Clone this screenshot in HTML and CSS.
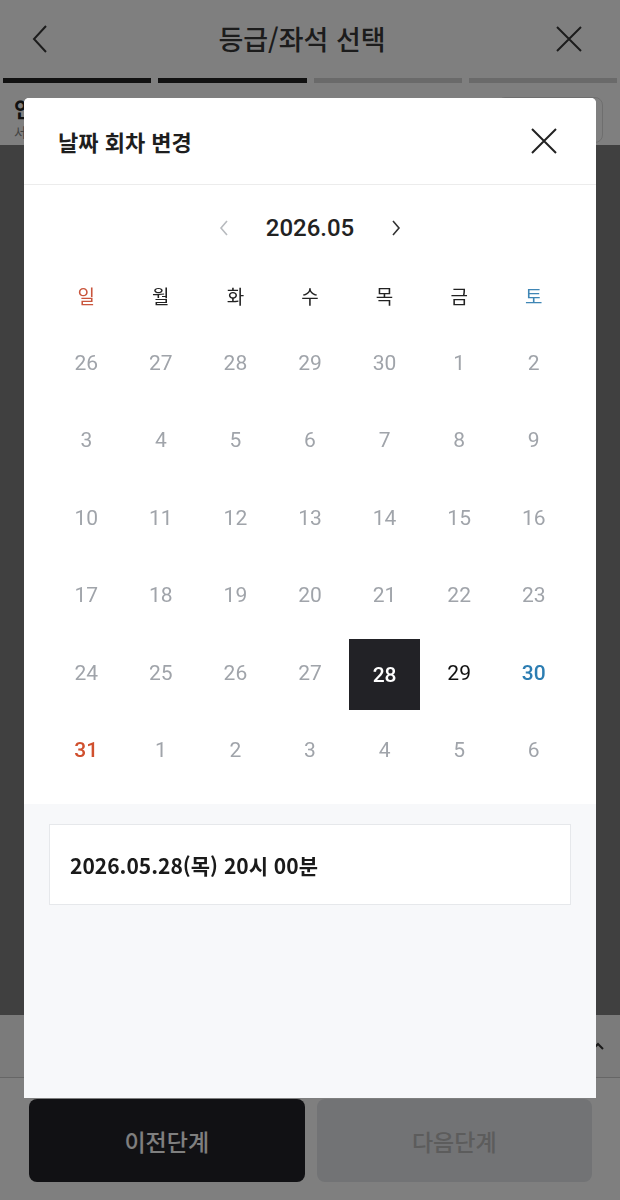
FILE: index.html
```html
<!DOCTYPE html>
<html lang="ko">
<head>
  <meta charset="UTF-8" />
  <title>등급/좌석 선택</title>
  <link rel="stylesheet" href="styles.css">
</head>
<body>

  <div class="page">
    <header class="top-bar">
      <button class="icon-btn back" aria-label="뒤로">
        <svg width="16" height="28" viewBox="0 0 16 28"><path d="M14 1 L2 14 L14 27" fill="none" stroke="#383838" stroke-width="2"/></svg>
      </button>
      <h1 class="top-title">등급/좌석 선택</h1>
      <button class="icon-btn close" aria-label="닫기">
        <svg width="26" height="26" viewBox="0 0 26 26"><path d="M1 1 L25 25 M25 1 L1 25" fill="none" stroke="#383838" stroke-width="2"/></svg>
      </button>
    </header>

    <div class="steps">
      <span class="step done"></span>
      <span class="step done"></span>
      <span class="step"></span>
      <span class="step"></span>
    </div>

    <div class="show-info">
      <div class="show-text">
        <p class="show-name">인</p>
        <p class="show-place">서</p>
      </div>
      <button class="outline-btn"></button>
    </div>

    <div class="seat-area"></div>

    <div class="summary-strip">
      <svg class="strip-arrow" width="12" height="8" viewBox="0 0 12 8"><path d="M1 7 L6 2 L11 7" fill="none" stroke="#333" stroke-width="2"/></svg>
    </div>

    <footer class="bottom-bar">
      <button class="step-btn prev">이전단계</button>
      <button class="step-btn next">다음단계</button>
    </footer>
  </div>

  <div class="dim"></div>

  <div class="modal">
    <div class="modal-head">
      <h2 class="modal-title">날짜 회차 변경</h2>
      <button class="icon-btn modal-close" aria-label="닫기">
        <svg width="26" height="26" viewBox="0 0 26 26"><path d="M1 1 L25 25 M25 1 L1 25" fill="none" stroke="#222" stroke-width="2"/></svg>
      </button>
    </div>

    <div class="calendar">
      <div class="month-nav">
        <button class="icon-btn nav-arrow" aria-label="이전 달">
          <svg width="10" height="16" viewBox="0 0 10 16"><path d="M8 1 L2 8 L8 15" fill="none" stroke="#b8bbbf" stroke-width="1.6"/></svg>
        </button>
        <span class="month-label">2026.05</span>
        <button class="icon-btn nav-arrow" aria-label="다음 달">
          <svg width="10" height="16" viewBox="0 0 10 16"><path d="M2 1 L8 8 L2 15" fill="none" stroke="#333" stroke-width="1.6"/></svg>
        </button>
      </div>

      <div class="weekdays">
        <span class="sun">일</span>
        <span>월</span>
        <span>화</span>
        <span>수</span>
        <span>목</span>
        <span>금</span>
        <span class="sat">토</span>
      </div>

      <div class="days">
        <span class="day off">26</span><span class="day off">27</span><span class="day off">28</span><span class="day off">29</span><span class="day off">30</span><span class="day off">1</span><span class="day off">2</span>
        <span class="day off">3</span><span class="day off">4</span><span class="day off">5</span><span class="day off">6</span><span class="day off">7</span><span class="day off">8</span><span class="day off">9</span>
        <span class="day off">10</span><span class="day off">11</span><span class="day off">12</span><span class="day off">13</span><span class="day off">14</span><span class="day off">15</span><span class="day off">16</span>
        <span class="day off">17</span><span class="day off">18</span><span class="day off">19</span><span class="day off">20</span><span class="day off">21</span><span class="day off">22</span><span class="day off">23</span>
        <span class="day off">24</span><span class="day off">25</span><span class="day off">26</span><span class="day off">27</span><span class="day selected"><b>28</b></span><span class="day">29</span><span class="day sat">30</span>
        <span class="day sun">31</span><span class="day off">1</span><span class="day off">2</span><span class="day off">3</span><span class="day off">4</span><span class="day off">5</span><span class="day off">6</span>
      </div>
    </div>

    <div class="round-list">
      <div class="round-item">2026.05.28(목) 20시 00분</div>
    </div>
  </div>

</body>
</html>
```

FILE: styles.css
```css
* {
  box-sizing: border-box;
}

body {
  margin: 0;
  font-family: "Noto Sans CJK KR", "Noto Sans", sans-serif;
  color: #222;
  background: #fff;
}

p,
h1,
h2 {
  margin: 0;
}

button {
  font-family: inherit;
  border: none;
  background: none;
  padding: 0;
  cursor: pointer;
}

.icon-btn {
  display: flex;
  align-items: center;
  justify-content: center;
}

/* page behind the popup */
.page {
  height: 1200px;
  display: flex;
  flex-direction: column;
  overflow: hidden;
}

.top-bar {
  height: 78px;
  display: flex;
  align-items: center;
  justify-content: space-between;
  padding: 0 38px 0 32px;
}

.top-title {
  font-size: 27px;
  font-weight: 500;
  color: #383838;
  margin-top: -2px;
}

.steps {
  display: flex;
  gap: 7px;
  padding: 0 3px;
}

.step {
  flex: 1;
  height: 5px;
  background: #d4d4d4;
}

.step.done {
  background: #222;
}

.show-info {
  height: 62px;
  display: flex;
  align-items: flex-start;
  justify-content: space-between;
  padding: 14px 17px 0 14px;
}

.show-name {
  font-size: 21px;
  font-weight: 700;
  line-height: 22px;
}

.show-place {
  font-size: 13px;
  color: #888;
  line-height: 18px;
  margin-top: 4px;
}

.outline-btn {
  width: 106px;
  height: 46px;
  border: 1px solid #ddd;
  border-radius: 8px;
}

.seat-area {
  flex: 1;
  background: #808080;
}

.summary-strip {
  height: 63px;
  background: #f6f6f6;
  border-bottom: 1px solid #ccc;
  display: flex;
  align-items: center;
  justify-content: flex-end;
  padding-right: 16px;
}

.bottom-bar {
  display: flex;
  gap: 12px;
  padding: 21px 28px 18px 29px;
}

.step-btn {
  flex: 1;
  height: 83px;
  border-radius: 8px;
  font-size: 23px;
  font-weight: 500;
}

.step-btn.prev {
  background: #222228;
  color: #fff;
}

.step-btn.next {
  background: #e4e6ea;
  color: #b8b8b8;
}

.dim {
  position: fixed;
  inset: 0;
  background: rgba(0, 0, 0, 0.5);
}

/* popup */
.modal {
  position: fixed;
  left: 24px;
  top: 98px;
  width: 572px;
  height: 1000px;
  background: #f7f8fa;
  border-radius: 5px 5px 0 0;
  overflow: hidden;
  display: flex;
  flex-direction: column;
}

.modal-head {
  height: 87px;
  background: #fff;
  border-bottom: 1px solid #ececec;
  display: flex;
  align-items: center;
  justify-content: space-between;
  padding: 0 39px 0 34px;
}

.modal-title {
  font-size: 22px;
  font-weight: 700;
  color: #1e1e1e;
}

.calendar {
  background: #fff;
  padding: 21px 25px 15px;
}

.month-nav {
  height: 44px;
  display: flex;
  align-items: center;
  justify-content: center;
  gap: 32px;
}

.nav-arrow {
  width: 20px;
  height: 30px;
}

.month-label {
  font-family: Roboto, "Noto Sans CJK KR", sans-serif;
  font-size: 24px;
  font-weight: 500;
  color: #222;
}

.weekdays {
  margin-top: 16px;
  height: 58px;
  display: grid;
  grid-template-columns: repeat(7, 1fr);
  align-items: center;
  text-align: center;
  font-size: 19px;
  color: #222;
}

.weekdays .sun {
  color: #c9553c;
}

.weekdays .sat {
  color: #3f86b5;
}

.days {
  display: grid;
  grid-template-columns: repeat(7, 1fr);
  grid-auto-rows: 77.5px;
  font-family: Roboto, "Noto Sans", sans-serif;
  font-size: 21px;
}

.day {
  display: flex;
  align-items: center;
  justify-content: center;
  color: #111;
}

.day.off {
  color: #a0a4aa;
}

.day.sun {
  color: #d0502e;
  font-weight: 500;
}

.day.sat {
  color: #2c7db2;
  font-weight: 500;
}

.day.selected b {
  width: 71px;
  height: 71px;
  margin-top: 4px;
  display: flex;
  align-items: center;
  justify-content: center;
  background: #222226;
  color: #fff;
  font-weight: 500;
}

.round-list {
  padding: 20px 25px;
}

.round-item {
  height: 81px;
  background: #fff;
  border: 1px solid #e6e8eb;
  display: flex;
  align-items: center;
  padding: 0 20px;
  font-size: 21px;
  font-weight: 700;
  color: #1a1a1a;
}
```
